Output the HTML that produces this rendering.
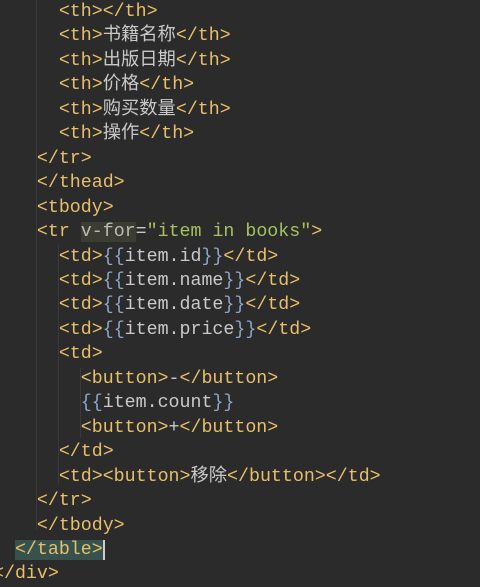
<!DOCTYPE html>
<html><head><meta charset="utf-8"><style>
body{margin:0;width:480px;height:578px;background:#2b2b2b;overflow:hidden;position:relative}
pre{margin:0;position:absolute;left:-7px;top:0px;font-family:"Liberation Mono","Noto Sans CJK SC",monospace;font-size:18.3px;line-height:24.45px;color:#c9c9c9}
.t{color:#e8bf6a}.s{color:#a5c261}.b{color:#8fa6c8}.a{color:#bababa;background:#3d3c33}
.hl{background:#37524d}
.cur{border-right:2px solid #ccc}
.g{position:absolute;width:1px;background:#3a3a3a}
</style></head><body>
<div class="g" style="left:36px;top:0;height:530px"></div>
<div class="g" style="left:58px;top:245px;height:240px"></div>
<div class="g" style="left:80px;top:368px;height:70px"></div>
<pre>      <span class="t">&lt;th&gt;&lt;/th&gt;</span>
      <span class="t">&lt;th&gt;</span>书籍名称<span class="t">&lt;/th&gt;</span>
      <span class="t">&lt;th&gt;</span>出版日期<span class="t">&lt;/th&gt;</span>
      <span class="t">&lt;th&gt;</span>价格<span class="t">&lt;/th&gt;</span>
      <span class="t">&lt;th&gt;</span>购买数量<span class="t">&lt;/th&gt;</span>
      <span class="t">&lt;th&gt;</span>操作<span class="t">&lt;/th&gt;</span>
    <span class="t">&lt;/tr&gt;</span>
    <span class="t">&lt;/thead&gt;</span>
    <span class="t">&lt;tbody&gt;</span>
    <span class="t">&lt;tr </span><span class="a">v-for</span>=<span class="s">"item in books"</span><span class="t">&gt;</span>
      <span class="t">&lt;td&gt;</span><span class="b">{{</span>item.id<span class="b">}}</span><span class="t">&lt;/td&gt;</span>
      <span class="t">&lt;td&gt;</span><span class="b">{{</span>item.name<span class="b">}}</span><span class="t">&lt;/td&gt;</span>
      <span class="t">&lt;td&gt;</span><span class="b">{{</span>item.date<span class="b">}}</span><span class="t">&lt;/td&gt;</span>
      <span class="t">&lt;td&gt;</span><span class="b">{{</span>item.price<span class="b">}}</span><span class="t">&lt;/td&gt;</span>
      <span class="t">&lt;td&gt;</span>
        <span class="t">&lt;button&gt;</span>-<span class="t">&lt;/button&gt;</span>
        <span class="b">{{</span>item.count<span class="b">}}</span>
        <span class="t">&lt;button&gt;</span>+<span class="t">&lt;/button&gt;</span>
      <span class="t">&lt;/td&gt;</span>
      <span class="t">&lt;td&gt;&lt;button&gt;</span>移除<span class="t">&lt;/button&gt;&lt;/td&gt;</span>
    <span class="t">&lt;/tr&gt;</span>
    <span class="t">&lt;/tbody&gt;</span>
  <span class="hl cur"><span class="t">&lt;/table&gt;</span></span>
<span class="t">&lt;/div&gt;</span></pre>
</body></html>
